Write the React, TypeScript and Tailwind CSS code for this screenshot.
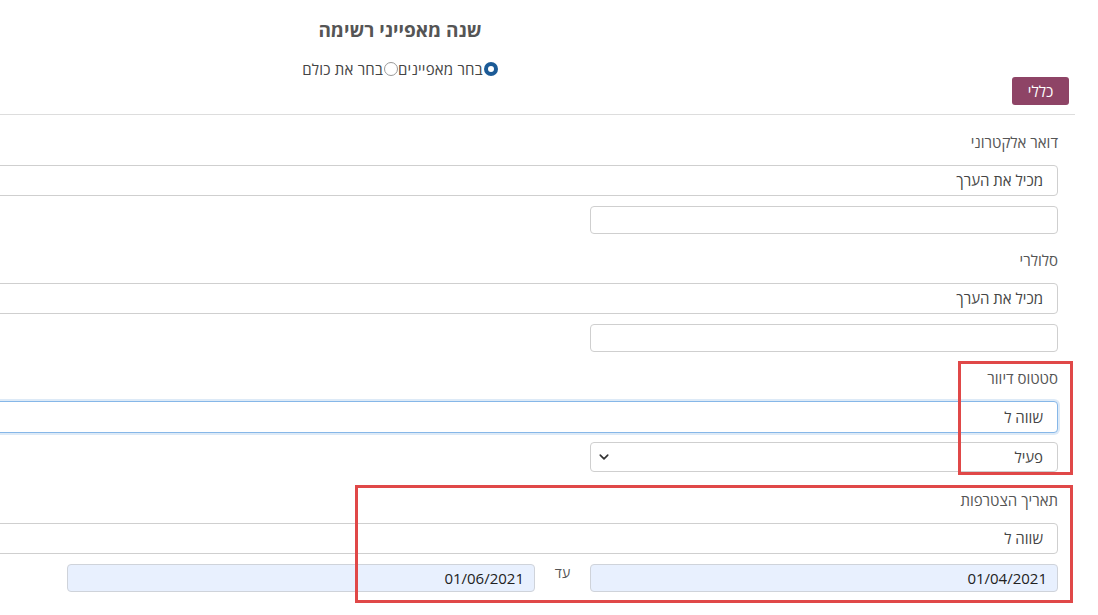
import React from "react";

const font = "font-['Open_Sans','Liberation_Sans',sans-serif]";

interface FieldGroupProps {
  label: string;
  className?: string;
  children: React.ReactNode;
}

const FieldGroup: React.FC<FieldGroupProps> = ({ label, className, children }) => (
  <div className={`flex flex-col ${className ?? "mb-[16px]"}`}>
    <div className="h-[20px] leading-[20px] text-[15px] text-[#555] mb-[13px]">
      {label}
    </div>
    {children}
  </div>
);

const SelectBox = ({
  value,
  focused,
}: {
  value: string;
  focused?: boolean;
}) => (
  <div
    className={`w-full flex items-center pr-[14px] rounded-[4px] border bg-white text-[15px] text-[#444] ${
      focused
        ? "h-[32px] border-[#86b7e8] shadow-[0_0_0_2px_rgba(120,170,225,0.25)]"
        : "h-[31px] border-[#cfcfcf]"
    }`}
  >
    {value}
  </div>
);

const TextBox = () => (
  <div className="h-[28px] w-[468px] mt-[10px] rounded-[4px] border border-[#cfcfcf] bg-white" />
);

const DropBox = ({ value }: { value: string }) => (
  <div className="h-[30px] w-[468px] mt-[9px] flex items-center justify-between pr-[14px] pl-[8px] rounded-[4px] border border-[#cfcfcf] bg-white text-[15px] text-[#444]">
    <span>{value}</span>
    <svg width="10" height="10" viewBox="0 0 16 16" fill="none">
      <path
        d="M2 5l6 6 6-6"
        stroke="#333"
        strokeWidth="2.6"
        strokeLinecap="round"
        strokeLinejoin="round"
      />
    </svg>
  </div>
);

const DateBox = ({ value }: { value: string }) => (
  <div className="h-[28px] w-[468px] flex items-center pr-[10px] rounded-[4px] border border-[#cfd3da] bg-[#e8f0fe] text-[15px] text-[#222]">
    {value}
  </div>
);

const Radio = ({ checked }: { checked?: boolean }) =>
  checked ? (
    <span className="w-[14px] h-[14px] rounded-full bg-[#1b5a96] flex items-center justify-center">
      <span className="w-[6px] h-[6px] rounded-full bg-white" />
    </span>
  ) : (
    <span className="w-[14px] h-[14px] rounded-full border border-[#999] bg-white" />
  );

export default function App() {
  return (
    <div
      dir="rtl"
      className={`relative w-[1098px] h-[615px] overflow-hidden bg-white ${font}`}
    >
      <div dir="ltr" className="w-[800px] mr-auto h-[77px] pt-[18px] flex flex-col items-center">
        <h1 dir="rtl" className="text-[19px] leading-[24px] font-bold text-[#555]">
          שנה מאפייני רשימה
        </h1>
        <div dir="rtl" className="mt-[17px] h-[20px] flex items-center text-[15px] text-[#444] tracking-[0.2px]">
          <Radio checked />
          <span className="mr-[1px]">בחר מאפיינים</span>
          <Radio />
          <span className="mr-[1px]">בחר את כולם</span>
        </div>
      </div>

      <div className="flex pr-[29px]">
        <button className="h-[28px] w-[57px] rounded-[3px] bg-[#8e4466] text-white text-[15px]">
          כללי
        </button>
      </div>

      <div className="mt-[9px] mr-[23px] border-t border-[#ddd]" />

      <div className="w-[1200px] pr-[40px] pt-[17px]">
        <FieldGroup label="דואר אלקטרוני">
          <SelectBox value="מכיל את הערך" />
          <TextBox />
        </FieldGroup>
        <FieldGroup label="סלולרי">
          <SelectBox value="מכיל את הערך" />
          <TextBox />
        </FieldGroup>
        <FieldGroup label="סטטוס דיוור" className="mb-[18px]">
          <SelectBox value="שווה ל" focused />
          <DropBox value="פעיל" />
        </FieldGroup>
        <FieldGroup label="תאריך הצטרפות">
          <SelectBox value="שווה ל" />
          <div className="flex mt-[10px]">
            <DateBox value="01/04/2021" />
            <div className="w-[55px] text-center text-[14px] text-[#555] leading-[16px] pt-[1px]">
              עד
            </div>
            <DateBox value="01/06/2021" />
          </div>
        </FieldGroup>
      </div>

      <div className="absolute left-[958px] top-[361px] w-[115px] h-[114px] border-[3px] border-[#e04848]" />
      <div className="absolute left-[355px] top-[485px] w-[718px] h-[118px] border-[3px] border-[#e04848]" />
    </div>
  );
}
